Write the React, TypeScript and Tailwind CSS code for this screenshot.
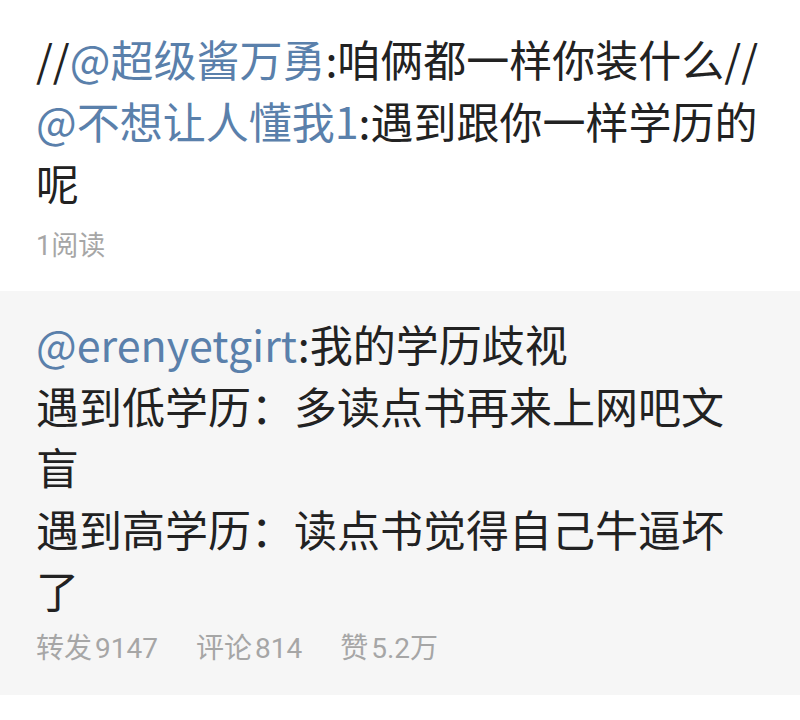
const font = { fontFamily: '"Noto Sans CJK SC", "Noto Sans", sans-serif' }
const meta = { fontFamily: 'Roboto, "Noto Sans CJK SC", sans-serif' }

function At({ children }: { children: React.ReactNode }) {
  return <span className="text-[#5a80ab]">{children}</span>
}

export default function App() {
  return (
    <div className="w-[800px] h-[720px] bg-white" style={font}>
      <div className="px-[36px] pt-[27px] pb-[26px] h-[291px]">
        <div className="text-[43px] leading-[62px] text-[#222222]">
          <div>
            //<At>@超级酱万勇</At>:咱俩都一样你装什么//
          </div>
          <div>
            <At>@不想让人懂我1</At>:遇到跟你一样学历的
          </div>
          <div>呢</div>
        </div>
        <div className="mt-[15px] text-[27px] leading-[36px] text-[#a6a6a6]" style={meta}>
          1阅读
        </div>
      </div>
      <div className="bg-[#f6f6f6] px-[36px] pt-[22px] h-[404px]">
        <div className="text-[43px] leading-[61.5px] text-[#222222]">
          <div>
            <At>@erenyetgirt</At>:我的学历歧视
          </div>
          <div>遇到低学历：多读点书再来上网吧文</div>
          <div>盲</div>
          <div>遇到高学历：读点书觉得自己牛逼坏</div>
          <div>了</div>
        </div>
        <div
          className="mt-[10px] flex gap-[38px] text-[28px] leading-[36px] text-[#a6a6a6]"
          style={meta}
        >
          <span>转发<span className="ml-[3px]">9147</span></span>
          <span>评论<span className="ml-[3px]">814</span></span>
          <span>赞<span className="ml-[3px]">5.2万</span></span>
        </div>
      </div>
    </div>
  )
}
